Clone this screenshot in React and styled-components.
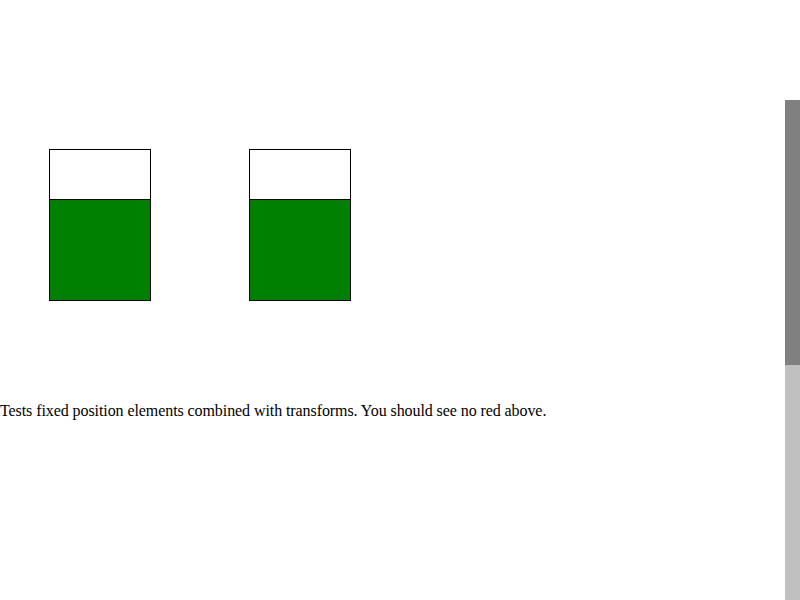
import styled, { createGlobalStyle } from "styled-components";

const GlobalStyle = createGlobalStyle`
  body {
    margin: 0;
    background: #fff;
    font-family: "Liberation Serif", "Times New Roman", serif;
    font-size: 16px;
    color: #000;
  }
`;

const Page = styled.main`
  padding-top: 149px;
`;

const BoxRow = styled.div`
  display: flex;
  gap: 98px;
  padding-left: 49px;
`;

const Box = styled.div`
  width: 100px;
  height: 150px;
  border: 1px solid #000;
  display: flex;
  flex-direction: column;
  justify-content: flex-end;
`;

const Fill = styled.div`
  height: 100px;
  border-top: 1px solid #000;
  background: green;
`;

const Note = styled.p`
  margin: 101px 0 0;
  line-height: 18px;
  letter-spacing: -0.08px;
`;

const Track = styled.div`
  position: fixed;
  top: 100px;
  right: 0;
  bottom: 0;
  width: 15px;
  display: flex;
  flex-direction: column;
  background: #c0c0c0;
`;

const Thumb = styled.div`
  height: 265px;
  background: #808080;
`;

export default function App() {
  return (
    <>
      <GlobalStyle />
      <Page>
        <BoxRow>
          <Box>
            <Fill />
          </Box>
          <Box>
            <Fill />
          </Box>
        </BoxRow>
        <Note>
          Tests fixed position elements combined with transforms. You should see no red above.
        </Note>
      </Page>
      <Track>
        <Thumb />
      </Track>
    </>
  );
}
